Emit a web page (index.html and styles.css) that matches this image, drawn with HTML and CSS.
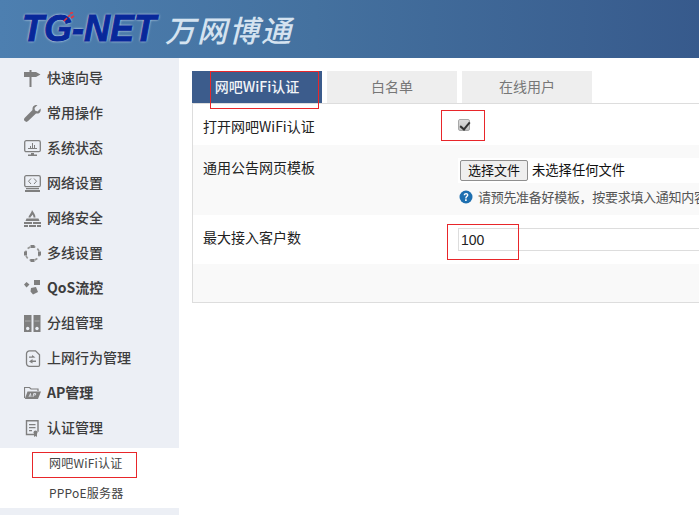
FILE: index.html
```html
<!DOCTYPE html>
<html lang="zh-CN">
<head>
<meta charset="utf-8">
<title>网吧WiFi认证</title>
<link rel="stylesheet" href="styles.css">
</head>
<body>
<header class="header">
  <div class="logo">
    <span class="logo-en">TG-NET</span><span class="logo-cn">万网博通</span>
    <svg class="logo-dots" viewBox="0 0 12 10"><path d="M1 9l3-3M5 5l2-2M8 6l3-2M7 1.500l3-1" stroke="#e8343c" stroke-width="1.600" fill="none"/></svg>
  </div>
</header>
<div class="layout">
  <nav class="sidebar">
    <a class="nav-item"><svg class="ico" viewBox="0 0 17 17"><path d="M0 2h5.500V0h2v2H12l4.500 2.500L12 7H7.500v10h-2V7H0z" fill="#7f7f7f"/></svg><span class="nav-text">快速向导</span></a>
    <a class="nav-item"><svg class="ico" viewBox="0 0 17 17"><path d="M16.500 3.500l-3 3-2.500-1L10.500 3l3-3C10.500-.500 8 1.500 8.500 5L.8 12.800a2.300 2.300 0 0 0 3.300 3.300L12 8.500c3 .7 5.500-1.800 4.500-5z" fill="#7f7f7f"/></svg><span class="nav-text">常用操作</span></a>
    <a class="nav-item"><svg class="ico" viewBox="0 0 17 17"><rect x=".7" y=".7" width="15.600" height="11" rx="1.500" fill="none" stroke="#7f7f7f" stroke-width="1.300"/><path d="M4 8h2V6h1v2h1V3h1v5h1V5h1v3h2v1H4zM7 13h3v1.500h3V16H4v-1.500h3z" fill="#7f7f7f"/></svg><span class="nav-text">系统状态</span></a>
    <a class="nav-item"><svg class="ico" viewBox="0 0 17 17"><rect x=".7" y=".7" width="15.600" height="11" rx="1.500" fill="none" stroke="#7f7f7f" stroke-width="1.300"/><path d="M7 3.500L4.500 6.200 7 9M10 3.500l2.500 2.700L10 9" fill="none" stroke="#7f7f7f"/><path d="M2 13h13v1.300H2zM1 15h15v2H1z" fill="#7f7f7f"/></svg><span class="nav-text">网络设置</span></a>
    <a class="nav-item"><svg class="ico" viewBox="0 0 17 17"><path d="M8 0c1 2 3.500 4 3.500 7.500h-2C9.500 6 9 5 8.500 4.500 8 6 7 6 6.500 7.500h-2C4.500 5.500 7 4 8 0zM2.500 8.500h12L15.500 11h-14zM0 12h8v2H0zM9 12h8v2H9zM0 15h4v2H0zM5 15h7v2H5zM13 15h4v2h-4z" fill="#7f7f7f"/></svg><span class="nav-text">网络安全</span></a>
    <a class="nav-item"><svg class="ico" viewBox="0 0 17 17"><circle cx="8.500" cy="8.500" r="6.800" fill="none" stroke="#999" stroke-width="1.700" stroke-dasharray="3 2.300"/><path d="M6.500 0h4v3h-4zM6.500 14h4v3h-4zM0 6.500h3v4H0zM14 6.500h3v4h-3z" fill="#7f7f7f"/></svg><span class="nav-text">多线设置</span></a>
    <a class="nav-item nav-latin"><svg class="ico" viewBox="0 0 17 17"><path d="M10 0h6v5h-6zM2.500 2l3 2.500-3 3-2.500-3zM7 8l5-1 2 5-5 2.500-2.500-3z" fill="#7f7f7f"/></svg><span class="nav-text">QoS流控</span></a>
    <a class="nav-item"><svg class="ico" viewBox="0 0 17 17"><path d="M0 0h7.500v17H0zM9.500 0H16.500v17H9.500z" fill="#7f7f7f"/><path d="M1 6h5.500M10.500 6h5" stroke="#a9a9a9"/><circle cx="3.700" cy="13.500" r="1.700" fill="#eceff5"/><circle cx="13" cy="13.500" r="1.700" fill="#eceff5"/></svg><span class="nav-text">分组管理</span></a>
    <a class="nav-item"><svg class="ico" viewBox="0 0 17 17"><path d="M5.500.8h6l4 4v10.500a1 1 0 0 1-1 1h-9a3 3 0 0 1-3-3V3.800a3 3 0 0 1 3-3z" fill="none" stroke="#7f7f7f" stroke-width="1.300"/><path d="M5 6.500h3V5l3.500 2.500L8 7.700H5zM12 10.500H8.500V9L5 11.500l3.500 2V12H12z" fill="#7f7f7f"/></svg><span class="nav-text">上网行为管理</span></a>
    <a class="nav-item nav-latin"><svg class="ico" viewBox="0 0 17 17"><path d="M.5 13V2.500h5l1.500 1.500h7v2" fill="none" stroke="#7f7f7f" stroke-width="1.200"/><path d="M3.500 6.500H17L14 14H.8z" fill="#7f7f7f"/><path d="M5 12l1.500-3.500M6.500 8.500L7 12M9 12l.7-3.500h2l-.2 1.500H9.500" fill="none" stroke="#eceff5" stroke-width=".8"/></svg><span class="nav-text">AP管理</span></a>
    <a class="nav-item"><svg class="ico" viewBox="0 0 17 17"><path d="M10 14.500H2.500V.8H14v11" fill="none" stroke="#7f7f7f" stroke-width="1.400"/><path d="M5 4h6.500v1.300H5zM5 7h6.500v1.300H5zM5 10h3v1.300H5z" fill="#7f7f7f"/><circle cx="11.500" cy="12.500" r="2" fill="#7f7f7f"/><path d="M10 14h3v3l-1.500-1-1.500 1z" fill="#7f7f7f"/></svg><span class="nav-text">认证管理</span></a>
    <div class="sub-menu">
      <a class="sub-item"><span class="sub-text">网吧WiFi认证</span></a>
      <a class="sub-item"><span class="sub-text">PPPoE服务器</span></a>
    </div>
  </nav>
  <main class="content">
    <div class="tabs">
      <a class="tab tab-active"><span class="tab-text">网吧WiFi认证</span></a>
      <a class="tab"><span class="tab-text">白名单</span></a>
      <a class="tab"><span class="tab-text">在线用户</span></a>
    </div>
    <div class="panel">
      <div class="row row-one">
        <label class="row-label">打开网吧WiFi认证</label>
        <div class="row-control"><input class="check" type="checkbox" checked></div>
      </div>
      <div class="row row-two row-alt">
        <label class="row-label">通用公告网页模板</label>
        <div class="row-control">
          <div class="file-line"><button class="file-btn" type="button">选择文件</button><span class="file-name">未选择任何文件</span></div>
          <div class="hint"><svg class="hint-ico" viewBox="0 0 14 14"><circle cx="7" cy="7" r="6.500" fill="#1d6fb0"/><path d="M4.700 5.300c0-3 4.700-3 4.700-.2 0 1.800-1.800 1.700-1.800 3.300H6.200c0-2.200 1.700-2.200 1.700-3.300 0-1-1.700-1-1.800.2zM6.100 9.300h1.600v1.600H6.100z" fill="#fff"/></svg><span class="hint-text">请预先准备好模板，按要求填入通知内容</span></div>
        </div>
      </div>
      <div class="row row-three">
        <label class="row-label">最大接入客户数</label>
        <div class="row-control"><input class="text-input" type="text" value="100"></div>
      </div>
      <div class="panel-foot"></div>
    </div>
  </main>
</div>
<div class="mark mark-tab"></div>
<div class="mark mark-check"></div>
<div class="mark mark-input"></div>
<div class="mark mark-sub"></div>
</body>
</html>
```

FILE: styles.css
```css
* { box-sizing: border-box; }
html, body { height: 100%; }
body {
  margin: 0;
  overflow: hidden;
  background: #fff;
  color: #222;
  font-family: "Noto Sans CJK SC", "Liberation Sans", sans-serif;
  font-size: 14px;
}
.header {
  height: 58px;
  background: linear-gradient(90deg, #4d7fb0 0%, #44719f 45%, #375a8c 100%);
  display: flex;
  align-items: center;
  padding: 0 0 0 22px;
}
.logo { position: relative; display: flex; align-items: center; gap: 9px; }
.logo-en {
  font-family: "Liberation Sans", sans-serif;
  font-weight: 700;
  font-style: italic;
  font-size: 36px;
  line-height: 40px;
  color: #08289a;
  -webkit-text-stroke: 1px #08289a;
  text-shadow: 0 0 2px #dfeaf5, 0 0 3px #dfeaf5;
}
.logo-cn {
  font-size: 30px;
  line-height: 40px;
  font-weight: 500;
  font-style: italic;
  letter-spacing: 2px;
  color: #d5e3f0;
}
.logo-dots { position: absolute; left: 41px; top: 3px; width: 12px; height: 10px; }
.layout { display: flex; height: 457px; }
.sidebar {
  flex: 0 0 179px;
  background: #eceff5;
  padding-top: 3px;
}
.nav-item {
  display: flex;
  align-items: center;
  height: 35px;
  padding-left: 24px;
  font-size: 14px;
  font-weight: 500;
  color: #3d3d3d;
}
.nav-text { padding-bottom: 4px; }
.nav-latin { font-weight: 700; }
.ico { width: 17px; height: 17px; margin-right: 6px; flex: none; }
.sub-menu { background: #fff; margin-top: 2px; height: 60px; }
.sub-item {
  display: flex;
  align-items: center;
  height: 30px;
  padding-left: 49px;
  font-size: 12px;
  color: #444;
}
.sub-text { padding-bottom: 2px; letter-spacing: 0.2px; }
.content { flex: 1; min-width: 0; padding: 13px 0 0 13px; overflow: hidden; }
.tabs { display: flex; gap: 5px; height: 33px; border-bottom: 1px solid #ddd; }
.tab {
  width: 130px;
  height: 32px;
  background: #eee;
  color: #777;
  font-size: 14px;
  display: flex;
  align-items: center;
  justify-content: center;
}
.tab-text { padding-bottom: 2px; }
.tab-active { background: #3c5c8c; color: #f2f4f8; font-weight: 500; }
.panel {
  width: 700px;
  border-left: 1px solid #ddd;
  border-bottom: 1px solid #ddd;
}
.row { display: flex; padding-left: 10px; }
.row-alt { background: #f9f9f9; }
.row-one { height: 41px; }
.row-two { height: 70px; }
.row-three { height: 49px; }
.panel-foot { height: 38px; background: #f9f9f9; }
.row-label { flex: 0 0 255px; font-size: 14px; color: #222; line-height: 20px; padding-top: 12px; }
.row-control { flex: 1; min-width: 0; }
.check {
  appearance: none;
  position: relative;
  display: block;
  width: 12px;
  height: 12px;
  margin: 15px 0 0 0;
  background: linear-gradient(#dcdcdc, #c4c4c4);
  border: 1px solid #a8a8a8;
  border-radius: 2px;
}
.check::after {
  content: "";
  position: absolute;
  left: 3px;
  top: 0;
  width: 4px;
  height: 8px;
  border: solid #333;
  border-width: 0 2px 2px 0;
  transform: rotate(40deg);
}
.file-line {
  display: flex;
  align-items: center;
  height: 25px;
  margin-top: 13px;
  padding-left: 2px;
  background: #fff;
}
.file-btn {
  width: 68px;
  height: 21px;
  padding: 0 0 2px;
  font-family: inherit;
  font-size: 13px;
  line-height: 17px;
  color: #111;
  background: #efefef;
  border: 1px solid #8f8f8f;
  border-radius: 2px;
}
.file-name { margin-left: 4px; padding-bottom: 2px; font-size: 13.300px; color: #111; }
.hint { display: flex; align-items: center; gap: 5px; margin-top: 4px; padding-left: 1px; height: 20px; }
.hint-ico { width: 14px; height: 14px; flex: none; }
.hint-text { padding-bottom: 2px; font-size: 13px; letter-spacing: -0.3px; color: #555; white-space: nowrap; }
.text-input {
  display: block;
  width: 300px;
  height: 23px;
  margin-top: 13px;
  padding: 1px 2px;
  border: 1px solid #ddd;
  background: #fff;
  font-family: "Liberation Sans", sans-serif;
  font-size: 14px;
  color: #222;
  outline: 0;
}
.mark { position: absolute; border: 1px solid #e8262a; pointer-events: none; }
.mark-tab { left: 210px; top: 71px; width: 109px; height: 38px; }
.mark-check { left: 441px; top: 110px; width: 44px; height: 31px; }
.mark-input { left: 447px; top: 224px; width: 72px; height: 36px; }
.mark-sub { left: 32px; top: 452px; width: 105px; height: 26px; }
```
